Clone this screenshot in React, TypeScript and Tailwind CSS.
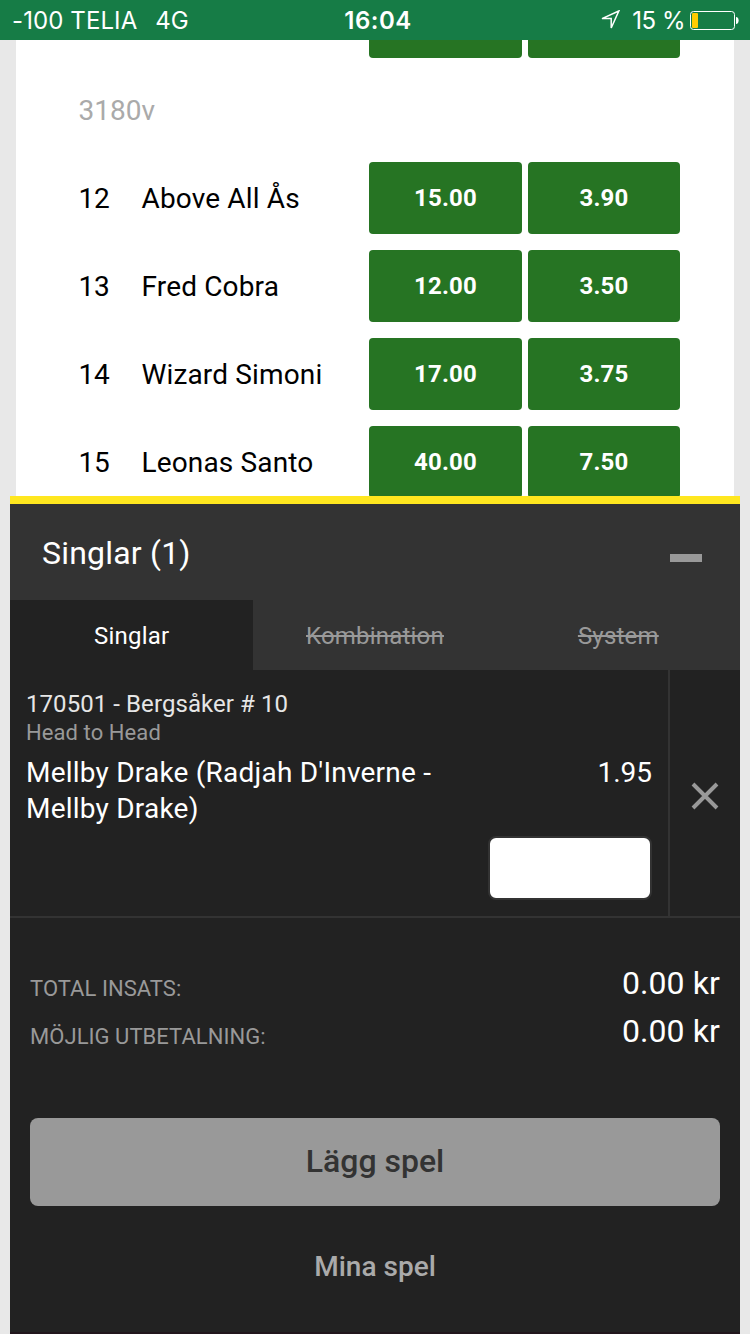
import { useState } from "react";

type Runner = { nr: string; name: string; win: string; place: string };

const runners: Runner[] = [
  { nr: "12", name: "Above All Ås", win: "15.00", place: "3.90" },
  { nr: "13", name: "Fred Cobra", win: "12.00", place: "3.50" },
  { nr: "14", name: "Wizard Simoni", win: "17.00", place: "3.75" },
  { nr: "15", name: "Leonas Santo", win: "40.00", place: "7.50" },
];

function StatusBar() {
  return (
    <header className="grid h-10 grid-cols-[1fr_auto_1fr] items-center bg-[#167c46] font-[Inter,sans-serif] text-2xl text-white">
      <div className="flex gap-[18px] pt-0.5 pl-3">
        <span className="tracking-[0.1px]">-100 TELIA</span>
        <span className="tracking-[-0.1px]">4G</span>
      </div>
      <span className="pt-0.5 pl-1.5 font-semibold tracking-[0.5px]">16:04</span>
      <div className="flex items-center justify-end pr-[11px]">
        <svg width="20" height="20" viewBox="0 0 20 20" fill="none" stroke="white" strokeWidth="1.5">
          <path d="M18.8 1 L2 8.6 H11.2 V18 Z" />
        </svg>
        <span className="ml-3 pt-0.5 tracking-[-0.5px]">15 %</span>
        <svg className="ml-[5px]" width="49" height="19" viewBox="0 0 49 19">
          <rect x="0.5" y="0.5" width="44" height="18" rx="3" fill="none" stroke="white" />
          <rect x="2" y="2" width="6" height="15" rx="1" fill="#ffcc00" />
          <path d="M46 6 C49.5 6 49.5 13 46 13 Z" fill="white" />
        </svg>
      </div>
    </header>
  );
}

function OddsButton({ odds }: { odds: string }) {
  return (
    <button className="h-18 rounded bg-[#267423] text-2xl font-bold text-white">
      {odds}
    </button>
  );
}

function RunnerRow({ nr, name, win, place }: Runner) {
  return (
    <div className="flex h-18 shrink-0 items-center text-[28px] tracking-[0.15px] text-black">
      <span className="w-[63px] pt-0.5 tracking-[-0.3px]">{nr}</span>
      <span className="flex-1 pt-0.5 whitespace-nowrap">{name}</span>
      <div className="grid grid-cols-[153px_152px] gap-1.5">
        <OddsButton odds={win} />
        <OddsButton odds={place} />
      </div>
    </div>
  );
}

function Totals({ label, value }: { label: string; value: string }) {
  return (
    <div className="flex h-12 items-center justify-between">
      <span className="pt-3 text-[22px] tracking-[0.05px] text-[#999]">{label}</span>
      <span className="pt-0.5 text-[32px] tracking-[0.1px] text-white">{value}</span>
    </div>
  );
}

function BetSlip() {
  const [stake, setStake] = useState("");

  return (
    <section className="mx-2.5 flex flex-1 flex-col border-t-8 border-[#ffe71f] bg-[#222]">
      <div className="flex h-24 items-center justify-between bg-[#333] pr-[38px] pl-8">
        <h2 className="pt-0.5 text-[32px] tracking-[0.2px] text-white">Singlar (1)</h2>
        <button className="mt-3 h-2 w-8 bg-[#999]" aria-label="Minimera" />
      </div>

      <nav className="grid h-[70px] grid-cols-3 bg-[#333] text-2xl tracking-[0.2px] text-[#999]">
        <button className="bg-[#222] pt-0.5 text-white">Singlar</button>
        <button className="pt-0.5 line-through">Kombination</button>
        <button className="pt-0.5 line-through">System</button>
      </nav>

      <div className="flex h-[248px] border-b-2 border-[#333]">
        <div className="flex flex-1 flex-col border-r-2 border-[#333] pt-5 pr-4 pl-4">
          <p className="text-2xl leading-7 tracking-[0.07px] text-[#e6e6e6]">170501 - Bergsåker # 10</p>
          <p className="pt-px text-[22px] leading-7 tracking-[0.08px] text-[#999]">Head to Head</p>
          <div className="mt-2 flex justify-between text-[28px] leading-9 text-white">
            <p className="w-[440px] tracking-[0.22px]">Mellby Drake (Radjah D'Inverne - Mellby Drake)</p>
            <p>1.95</p>
          </div>
          <input
            value={stake}
            onChange={(e) => setStake(e.target.value)}
            aria-label="Insats"
            className="mt-[9px] h-16 w-[164px] self-end rounded-lg border-2 border-[#333] bg-white px-3 text-[28px] text-black"
          />
        </div>
        <button className="flex w-[70px] items-center justify-center pt-[5px]" aria-label="Ta bort">
          <svg width="28" height="28" viewBox="0 0 28 28" stroke="#999" strokeWidth="3.9">
            <path d="M2 2 L26 26 M26 2 L2 26" />
          </svg>
        </button>
      </div>

      <div className="px-5 pt-10">
        <Totals label="TOTAL INSATS:" value="0.00 kr" />
        <Totals label="MÖJLIG UTBETALNING:" value="0.00 kr" />
        <button className="mt-16 h-22 w-full rounded-lg bg-[#999] pb-0.5 text-[32px] font-medium text-[#333]">
          Lägg spel
        </button>
        <button className="mt-10 w-full text-[28px] font-medium text-[#aaa]">Mina spel</button>
      </div>
      <div className="mt-auto h-0.5 bg-[#21161c]" />
    </section>
  );
}

export default function App() {
  return (
    <div className="flex h-[1334px] w-[750px] flex-col overflow-hidden bg-[#e8e8e8] font-[Roboto,sans-serif]">
      <StatusBar />
      <main className="mx-4 flex h-[456px] shrink-0 flex-col overflow-hidden bg-white pr-[54px] pl-[62.5px]">
        <div className="ml-auto grid h-[18px] shrink-0 grid-cols-[153px_152px] gap-1.5">
          <div className="rounded-b bg-[#267423]" />
          <div className="rounded-b bg-[#267423]" />
        </div>
        <h3 className="flex h-[104px] shrink-0 items-center pt-0.5 text-[28px] text-[#aaa]">3180v</h3>
        <div className="flex flex-col gap-4">
          {runners.map((runner) => (
            <RunnerRow key={runner.nr} {...runner} />
          ))}
        </div>
      </main>
      <BetSlip />
    </div>
  );
}
